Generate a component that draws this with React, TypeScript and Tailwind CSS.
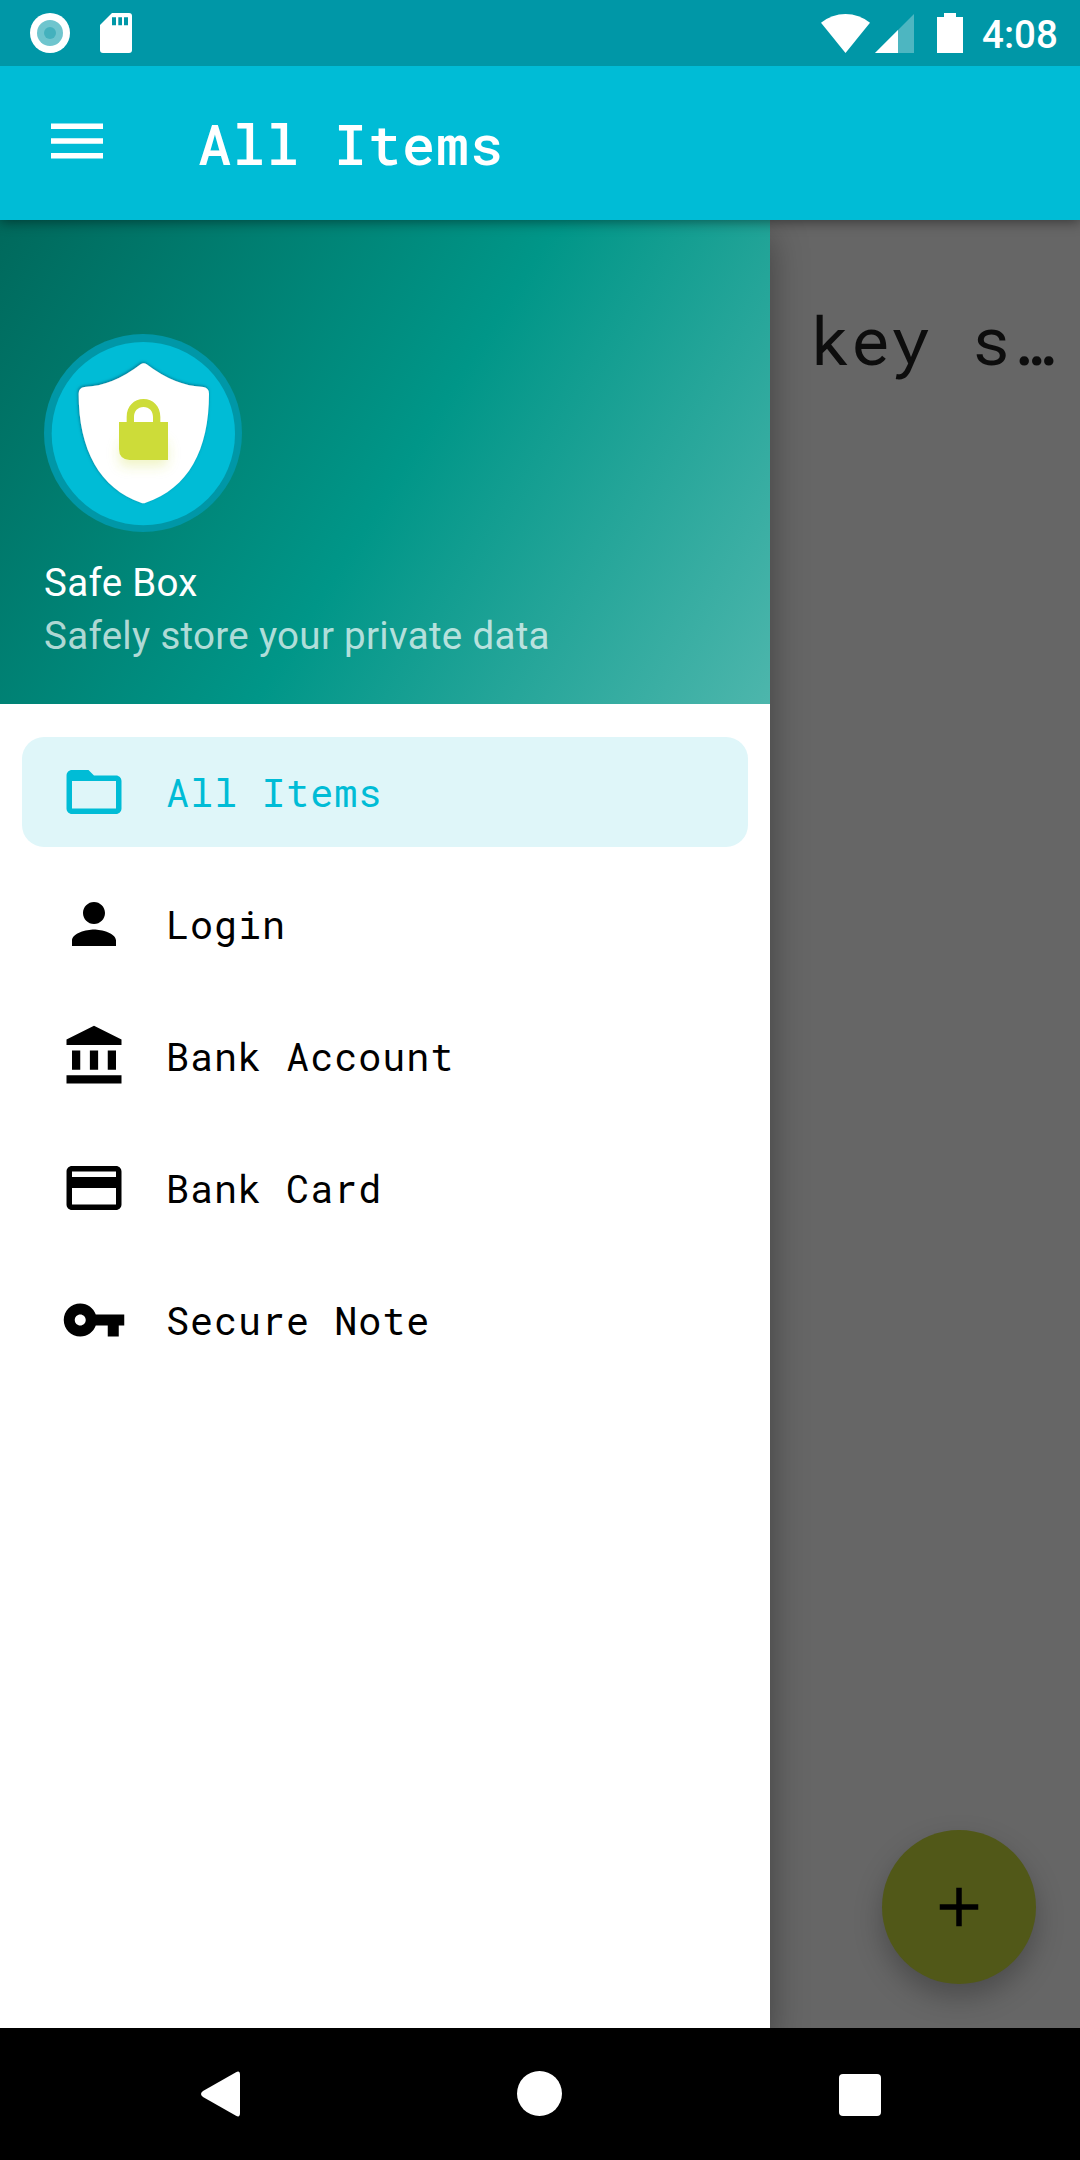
import React from "react";

const MONO = "font-['Roboto_Mono','DejaVu_Sans_Mono',monospace]";

function StatusBar() {
  return (
    <div className="relative z-30 flex h-[66px] shrink-0 items-center bg-[#0097a7] pl-[30px] pr-[22px] text-white">
      <svg width="40" height="40" viewBox="0 0 40 40">
        <circle cx="20" cy="20" r="20" fill="#fff" />
        <circle cx="20" cy="20" r="13" fill="#6fc5ce" />
        <circle cx="20" cy="20" r="6" fill="#44b1bd" />
      </svg>
      <svg className="ml-[30px]" width="32" height="40" viewBox="0 0 32 40">
        <path d="M12 0H29a3 3 0 0 1 3 3V37a3 3 0 0 1-3 3H3a3 3 0 0 1-3-3V12z" fill="#fff" />
        <path d="M12 4.300h4v8h-4zM18.300 4.300h3.700v8h-3.700zM24 4.300h4v8h-4z" fill="#0097a7" />
      </svg>
      <div className="flex-1" />
      <svg width="49" height="39" viewBox="0 0 49 39">
        <path d="M0 8.700Q11 0 24.500 0T49 8.700L24.500 39z" fill="#fff" />
      </svg>
      <svg className="ml-[5px]" width="39" height="39" viewBox="0 0 39 39">
        <path d="M39 0V39H0z" fill="#fff" fillOpacity=".3" />
        <path d="M23 16V39H0z" fill="#fff" />
      </svg>
      <svg className="ml-[23px]" width="26" height="40" viewBox="0 0 26 40">
        <path d="M7 0H19V4H26V40H0V4H7z" fill="#fff" />
      </svg>
      <span className="ml-[19px] w-[76px] whitespace-nowrap pt-[4px] font-['Roboto',sans-serif] text-[38.5px] font-medium leading-none">
        4:08
      </span>
    </div>
  );
}

function AppBar() {
  return (
    <header className="relative z-20 flex h-[154px] shrink-0 items-center bg-[#00bcd6] pl-[51px] text-white shadow-[0_2px_12px_rgba(0,0,0,0.45)]">
      <svg className="-mt-[4px]" width="52" height="36" viewBox="0 0 52 36">
        <path d="M0 .5H52V6H0zM0 15.200H52V20.800H0zM0 30H52V35.500H0z" fill="#fff" />
      </svg>
      <h1 className={`${MONO} ml-[95px] text-[55px] font-medium leading-none tracking-[1px]`}>All Items</h1>
    </header>
  );
}

function Logo() {
  return (
    <svg width="198" height="198" viewBox="42 42 594 594">
      <defs>
        <filter id="shield" x="-20%" y="-20%" width="140%" height="140%">
          <feDropShadow dx="-2" dy="-3" stdDeviation="5" floodColor="#00607a" floodOpacity=".8" />
        </filter>
        <filter id="glow" x="-50%" y="-80%" width="200%" height="260%">
          <feGaussianBlur stdDeviation="18" />
        </filter>
      </defs>
      <circle cx="339" cy="339" r="297" fill="#0097a7" />
      <circle cx="340" cy="341" r="275" fill="#00bcd6" />
      <path
        filter="url(#shield)"
        fill="#fff"
        d="M332 133q9-6 18 0Q435 198 520 201q17 3 17 20C537 390 475 505 347 548q-7 3-14 0C210 505 146 390 146 221q0-17 17-20Q248 198 332 133z"
      />
      <rect x="267" y="360" width="147" height="80" rx="24" fill="#cddc39" fillOpacity=".28" filter="url(#glow)" />
      <path
        fill="#cddc39"
        fillRule="evenodd"
        d="M267 306H290V291C290 258 312 237 340.500 237S391 258 391 291V306H414V420H299Q267 418 267 387zM312 306H369V291C369 274 358 261 340.500 261S312 274 312 291z"
      />
    </svg>
  );
}

const items = [
  {
    label: "All Items",
    path: "M20 6h-8l-2-2H4c-1.100 0-1.990.9-1.990 2L2 18c0 1.100.9 2 2 2h16c1.100 0 2-.9 2-2V8c0-1.100-.9-2-2-2zm0 12H4V8h16v10z",
    active: true,
  },
  {
    label: "Login",
    path: "M12 12c2.210 0 4-1.790 4-4s-1.790-4-4-4-4 1.790-4 4 1.790 4 4 4zm0 2c-2.670 0-8 1.340-8 4v2h16v-2c0-2.660-5.330-4-8-4z",
  },
  {
    label: "Bank Account",
    path: "M4 10v7h3v-7H4zm6.500 0v7h3v-7h-3zM2 22h20v-3H2v3zm15-12v7h3v-7h-3zM12 1L2 6v2h20V6L12 1z",
  },
  {
    label: "Bank Card",
    path: "M20 4H4c-1.110 0-1.990.89-1.990 2L2 18c0 1.110.89 2 2 2h16c1.110 0 2-.89 2-2V6c0-1.110-.89-2-2-2zm0 14H4v-6h16v6zm0-10H4V6h16v2z",
  },
  {
    label: "Secure Note",
    path: "M12.650 10C11.830 7.670 9.610 6 7 6c-3.310 0-6 2.690-6 6s2.690 6 6 6c2.610 0 4.830-1.670 5.650-4H17v4h4v-4h2v-4H12.650zM7 14c-1.100 0-2-.9-2-2s.9-2 2-2 2 .9 2 2-.9 2-2 2z",
  },
];

function Drawer() {
  return (
    <aside className="relative z-10 flex w-[770px] shrink-0 flex-col bg-white shadow-[0_16px_34px_rgba(0,0,0,0.38)]">
      <div className="h-[484px] bg-[linear-gradient(122.2deg,#00695c_0%,#009688_52%,#4db6ac_100%)] pl-[44px] pt-[114px] font-['Roboto',sans-serif] text-[38.5px] tracking-[0.3px] text-white">
        <Logo />
        <p className="mt-[24px] leading-[53px]">Safe Box</p>
        <p className="leading-[53px] text-white/70">Safely store your private data</p>
      </div>
      <nav className="flex flex-col gap-[22px] px-[22px] pt-[33px]">
        {items.map((it) => (
          <a
            key={it.label}
            className={`flex h-[110px] items-center rounded-[22px] pl-[39px] ${it.active ? "bg-[#dff6f9] text-[#00bcd6]" : "text-black"}`}
          >
            <svg width="66" height="66" viewBox="0 0 24 24" fill="currentColor">
              <path d={it.path} />
            </svg>
            <span className={`${MONO} ml-[39px] text-[38.5px] leading-none tracking-[0.92px]`}>{it.label}</span>
          </a>
        ))}
      </nav>
    </aside>
  );
}

function Content() {
  return (
    <main className="flex min-w-0 flex-1 flex-col items-end justify-between bg-[#666] pb-[44px] pl-[36px] pr-[44px] pt-[80px]">
      <p className={`${MONO} -mr-[15px] whitespace-nowrap text-[66px] leading-[80px] tracking-[0.4px] text-[#0d0d0d]`}>key s…</p>
      <button className="flex size-[154px] items-center justify-center rounded-full bg-[#515818] shadow-[0_13px_28px_rgba(0,0,0,0.26)]">
        <svg width="66" height="66" viewBox="0 0 24 24" fill="#000">
          <path d="M19 13h-6v6h-2v-6H5v-2h6V5h2v6h6v2z" />
        </svg>
      </button>
    </main>
  );
}

function NavBar() {
  return (
    <footer className="relative z-20 flex h-[132px] shrink-0 items-center justify-between bg-black pl-[201px] pr-[199px]">
      <svg width="39" height="46" viewBox="0 0 39 46">
        <path d="M35 1.200Q39-1 39 4V42Q39 47 35 44.800L2 26Q-2 23 2 20z" fill="#fff" />
      </svg>
      <svg className="-mt-px mr-px" width="45" height="45" viewBox="0 0 45 45">
        <circle cx="22.5" cy="22.5" r="22.5" fill="#fff" />
      </svg>
      <div className="mt-px h-[42px] w-[42px] rounded-[4px] bg-white" />
    </footer>
  );
}

export default function App() {
  return (
    <div className="flex h-[2160px] w-[1080px] flex-col overflow-hidden">
      <StatusBar />
      <AppBar />
      <div className="flex min-h-0 flex-1">
        <Drawer />
        <Content />
      </div>
      <NavBar />
    </div>
  );
}
